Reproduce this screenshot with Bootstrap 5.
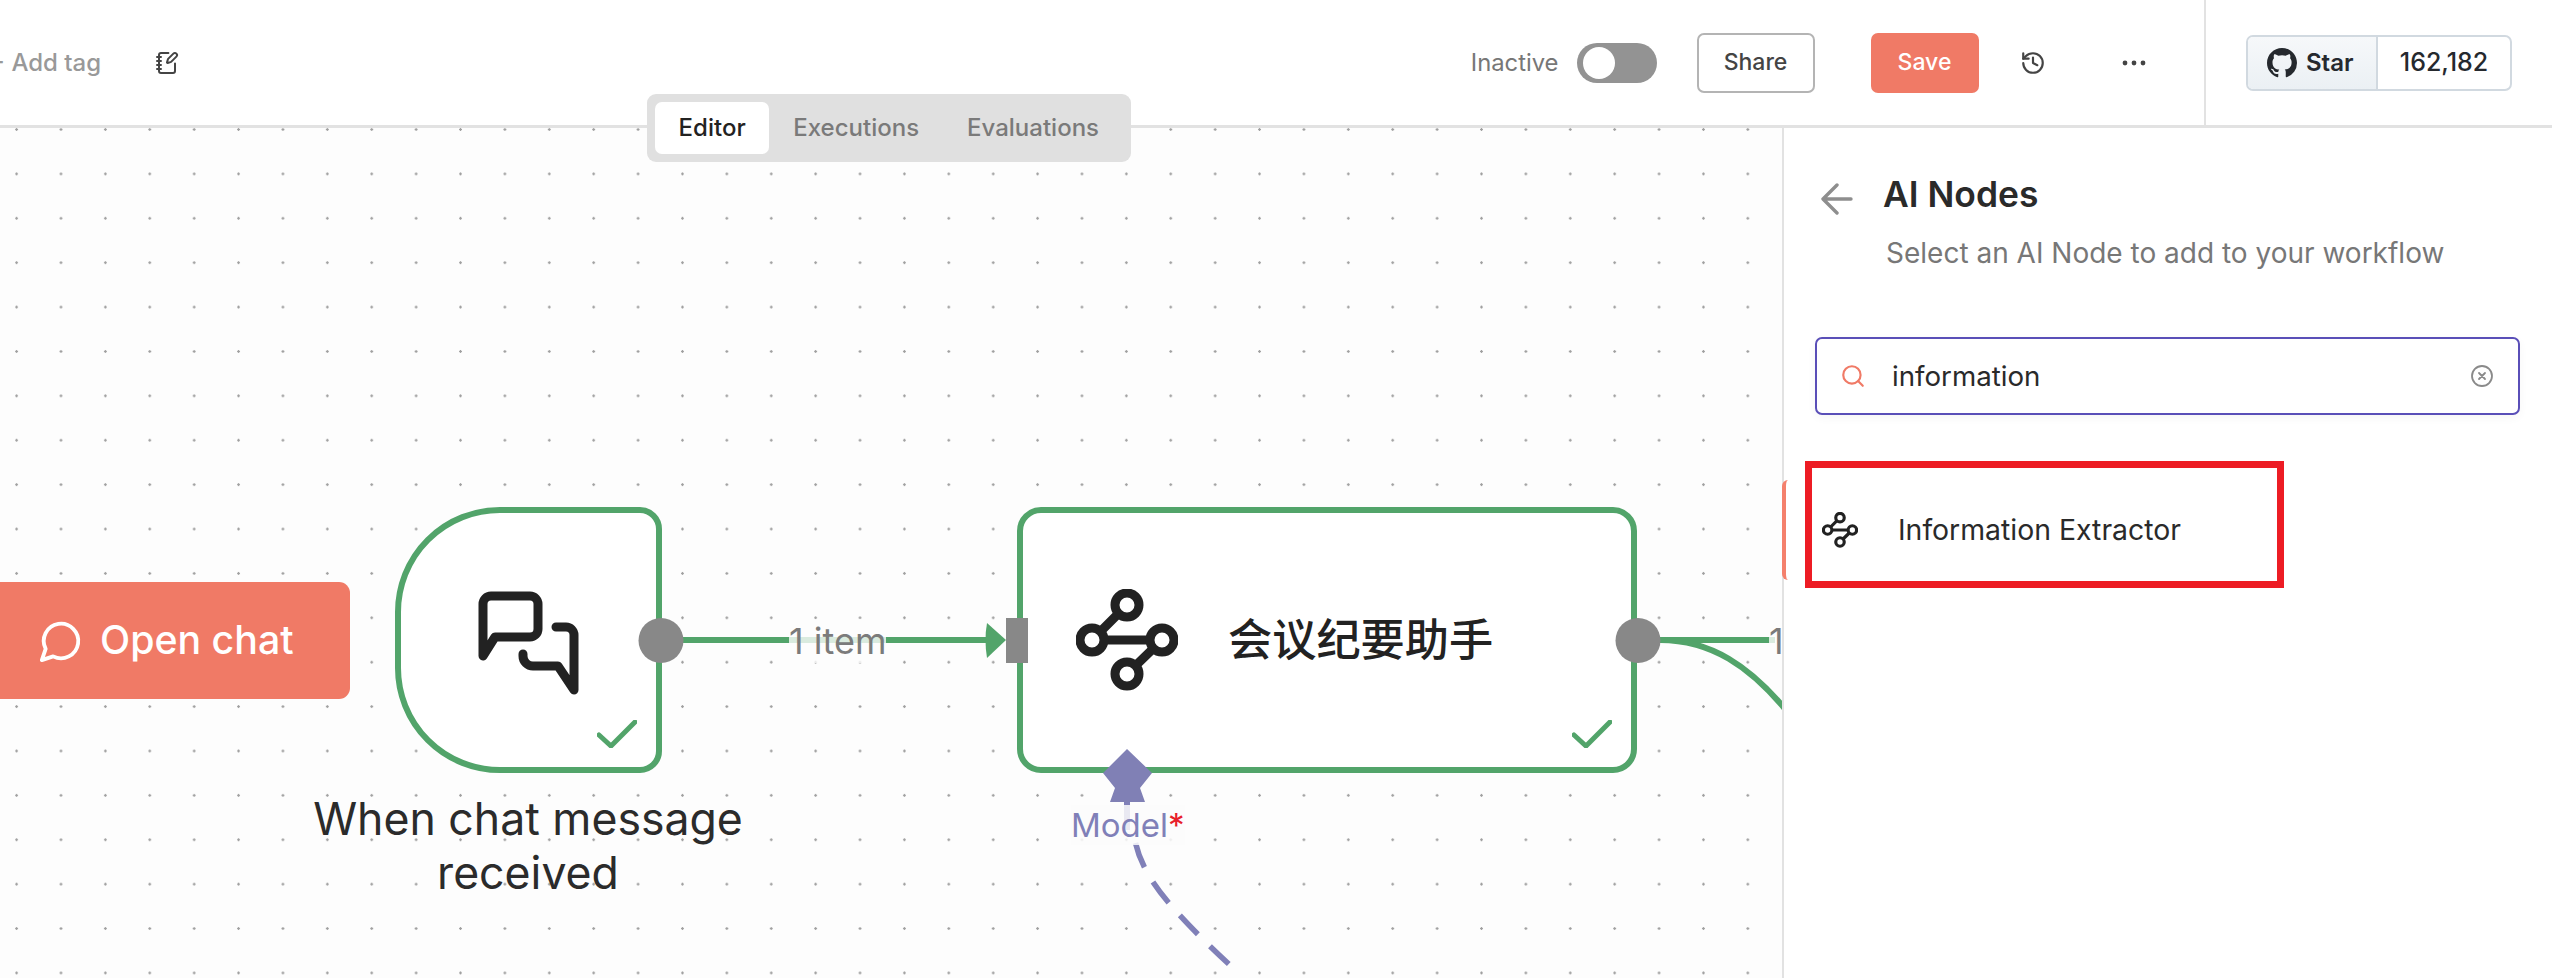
<!DOCTYPE html>
<html lang="en">
<head>
<meta charset="UTF-8">
<title>n8n workflow editor</title>
<link href="https://cdn.jsdelivr.net/npm/bootstrap@5.3.2/dist/css/bootstrap.min.css" rel="stylesheet">
<style>
  body { font-family: Inter, "Noto Sans CJK SC", sans-serif; width: 2552px; height: 978px; overflow: hidden; background: #fff; color: #222; }
  .top-bar { height: 128px; border-bottom: 3px solid #e2e2e2; }
  .tag-add { margin-left: -11px; font-size: 24px; font-weight: 500; color: #999; }
  .tag-edit { margin-left: 54px; color: #444; }
  .active-label { font-size: 23.8px; font-weight: 400; color: #777; }
  .toggle-track { width: 80px; height: 40px; margin-left: 18px; border-radius: 20px; background: #939393; padding: 4px 6px; }
  .toggle-knob { width: 32px; height: 32px; border-radius: 50%; background: #fff; }
  .btn-share, .btn-save { height: 60px; font-size: 23px; font-weight: 500; border-radius: 7px; padding: 0; }
  .btn-share { width: 118px; margin-left: 40px; border: 2px solid #b4b4b4; color: #444; background: #fff; }
  .btn-save { width: 108px; margin-left: 56px; border: 0; background: #f07a66; color: #fff; }
  .icon-history { margin-left: 41px; color: #444; }
  .icon-more { margin-left: 76.5px; margin-right: 58px; color: #444; }
  .star-box { width: 348px; height: 125px; border-left: 2px solid #e2e2e2; padding-left: 40px; }
  .gh-star { width: 266px; height: 56px; border: 2px solid #d1d9e0; border-radius: 7px; font-size: 24px; font-weight: 600; color: #25292e; overflow: hidden; }
  .gh-left { width: 130px; background: linear-gradient(#f6f8fa, #ebf0f4); border-right: 2px solid #d1d9e0; padding-left: 19px; gap: 9px; }
  .gh-count { flex: 1; font-size: 25px; font-weight: 500; }
  .main-area { height: 850px; }
  .canvas-area { width: 1782px; height: 850px; overflow: hidden; background-color: #fdfdfd; background-image: radial-gradient(circle, #a0a0a0 1px, transparent 1.5px); background-size: 44.4px 44.4px; background-position: -5.6px -20.7px; }
  .edge-layer { left: 0; top: 0; }
  .view-tabs { left: 647px; top: 94px; width: 484px; height: 68px; background: #e0e0e0; border-radius: 9px; padding: 8px; z-index: 5; font-size: 24px; font-weight: 500; color: #7a7a7a; }
  .view-tab { height: 52px; padding: 0 24px; border-radius: 7px; }
  .view-tab-on { width: 115px; padding: 0; background: #fff; color: #222; }
  .open-chat { left: 0; top: 454px; width: 350px; height: 117px; background: #f07a66; color: #fff; border-radius: 0 11px 11px 0; font-size: 39.3px; font-weight: 500; padding-left: 38px; gap: 16px; }
  .flow-node { top: 379px; height: 266px; background: #fff; border: 6px solid #52a46a; }
  .node-trigger { left: 395px; width: 267px; border-radius: 105px 22px 22px 105px; }
  .node-ai { left: 1017px; width: 620px; border-radius: 24px; padding-left: 53px; gap: 50px; font-size: 44.2px; font-weight: 500; }
  .icon-chat { left: 70px; top: 74px; }
  .node-check { right: 19px; bottom: 19px; }
  .node-caption { left: 264px; top: 664px; width: 528px; font-size: 44.6px; line-height: 54px; font-weight: 400; color: #2b2b2b; text-align: center; }
  .edge-label { font-size: 36px; line-height: 44px; color: #7b7b7b; background: rgba(252,252,252,.8); }
  .label-one { left: 789px; top: 491px; }
  .label-two { left: 1769px; top: 491px; }
  .model-label { left: 1071px; top: 677px; font-size: 33px; line-height: 40px; color: #8080b8; background: rgba(252,252,252,.85); }
  .model-label span { color: #e8202a; }
  .side-panel { width: 770px; border-left: 2px solid #e2e2e2; }
  .panel-head { padding: 42.5px 0 0 37px; gap: 30px; }
  .panel-back { margin-top: 8px; }
  .panel-title { font-size: 35.4px; line-height: 48px; font-weight: 600; margin: 0; color: #2a2a2a; }
  .panel-sub { margin: 16.5px 0 0 102px; font-size: 28px; line-height: 36px; color: #777; }
  .search-box { width: 705px; height: 78px; margin: 66px 0 0 31px; border: 2.5px solid #5a4fb8; border-radius: 7px; padding: 0 24px 0 23px; box-shadow: 0 3px 10px rgba(0,0,0,.04); }
  .search-input { border: 0; outline: 0; padding: 2px 0 0; margin-left: 26px; font-size: 27.7px; color: #2a2a2a; box-shadow: none; background: transparent; }
  .node-item { height: 100px; margin: 65px 0 0 -2px; padding: 0 0 0 36px; gap: 40px; border: 0; border-left: 4px solid #f4806c; border-radius: 0; font-size: 28.4px; font-weight: 400; color: #2a2a2a; background: transparent; }
  .red-box { left: 19px; top: -19px; width: 479px; height: 127px; border: 7px solid #ed1c24; pointer-events: none; }
</style>
</head>
<body>
  <svg width="0" height="0" class="d-block">
    <symbol id="node-graph" viewBox="0 0 102 102">
      <g fill="#fff" stroke="#222" stroke-width="9">
        <path d="M16 51H86M51 16L16 51M86 51L51 85" fill="none"/>
        <circle cx="51" cy="16" r="12"/>
        <circle cx="16" cy="51" r="12"/>
        <circle cx="86" cy="51" r="12"/>
        <circle cx="51" cy="85" r="12"/>
      </g>
    </symbol>
  </svg>

  <header class="top-bar d-flex align-items-center">
    <span class="tag-add">+ Add tag</span>
    <svg class="tag-edit" width="24" height="24" viewBox="0 0 24 24" fill="none" stroke="currentColor" stroke-width="2" stroke-linecap="round" stroke-linejoin="round"><path d="M13.4 2H6a2 2 0 0 0-2 2v16a2 2 0 0 0 2 2h12a2 2 0 0 0 2-2v-7.4"/><path d="M2 6h4M2 10h4M2 14h4M2 18h4"/><path d="M21.378 5.626a1 1 0 1 0-3.004-3.004l-5.01 5.012a2 2 0 0 0-.506.854l-.837 2.87a.5.5 0 0 0 .62.62l2.87-.837a2 2 0 0 0 .854-.506z"/></svg>
    <div class="ms-auto d-flex align-items-center">
      <span class="active-label">Inactive</span>
      <div class="toggle-track"><div class="toggle-knob"></div></div>
      <button class="btn btn-share">Share</button>
      <button class="btn btn-save">Save</button>
      <svg class="icon-history" width="26" height="26" viewBox="0 0 24 24" fill="none" stroke="currentColor" stroke-width="2" stroke-linecap="round" stroke-linejoin="round"><path d="M3 12a9 9 0 1 0 9-9 9.75 9.75 0 0 0-6.74 2.74L3 8"/><path d="M3 3v5h5"/><path d="M12 7v5l4 2"/></svg>
      <svg class="icon-more" width="24" height="6" viewBox="0 0 24 6" fill="currentColor"><circle cx="3" cy="3" r="2.4"/><circle cx="12" cy="3" r="2.4"/><circle cx="21" cy="3" r="2.4"/></svg>
      <div class="star-box d-flex align-items-center">
        <div class="gh-star d-flex">
          <div class="gh-left d-flex align-items-center">
            <svg width="30" height="30" viewBox="0 0 16 16" fill="#25292e"><path d="M8 0C3.58 0 0 3.58 0 8c0 3.54 2.29 6.53 5.47 7.59.4.07.55-.17.55-.38 0-.19-.01-.82-.01-1.49-2.01.37-2.53-.49-2.69-.94-.09-.23-.48-.94-.82-1.13-.28-.15-.68-.52-.01-.53.63-.01 1.08.58 1.23.82.72 1.21 1.87.87 2.33.66.07-.52.28-.87.51-1.07-1.78-.2-3.64-.89-3.64-3.95 0-.87.31-1.59.82-2.15-.08-.2-.36-1.02.08-2.12 0 0 .67-.21 2.2.82.64-.18 1.32-.27 2-.27.68 0 1.36.09 2 .27 1.53-1.04 2.2-.82 2.2-.82.44 1.1.16 1.92.08 2.12.51.56.82 1.27.82 2.15 0 3.07-1.87 3.75-3.65 3.95.29.25.54.73.54 1.48 0 1.07-.01 1.93-.01 2.2 0 .21.15.46.55.38A8.013 8.013 0 0016 8c0-4.42-3.58-8-8-8z"/></svg>
            <span>Star</span>
          </div>
          <div class="gh-count d-flex align-items-center justify-content-center">162,182</div>
        </div>
      </div>
    </div>
  </header>

  <div class="main-area d-flex">
    <main class="canvas-area position-relative">
      <svg class="edge-layer position-absolute" width="1782" height="850" viewBox="0 128 1782 850" fill="none">
        <path d="M683 640H990M1660 640H1775" stroke="#52a46a" stroke-width="6"/>
        <path d="M1660 640C1710 640 1750 665 1790 715" stroke="#52a46a" stroke-width="6"/>
        <path d="M1127 800V830" stroke="#8080b8" stroke-width="6"/>
        <path d="M1135.5 843C1143 875 1165 905 1233 968" stroke="#8080b8" stroke-width="5.5" stroke-dasharray="26 17"/>
      </svg>

      <div class="open-chat position-absolute d-flex align-items-center">
        <svg width="46" height="46" viewBox="0 0 24 24" fill="none" stroke="#fff" stroke-width="2" stroke-linecap="round" stroke-linejoin="round"><path d="M7.9 20A9 9 0 1 0 4 16.1L2 22Z"/></svg>
        <span>Open chat</span>
      </div>

      <div class="flow-node node-trigger position-absolute">
        <svg class="icon-chat position-absolute" width="110" height="110" viewBox="470 585 110 110" fill="none" stroke="#222" stroke-width="9" stroke-linecap="round" stroke-linejoin="round"><path d="M482 654V602a8 8 0 0 1 8-8H529a8 8 0 0 1 8 8V627a8 8 0 0 1-8 8H494Z"/><path d="M555 625H565a8 8 0 0 1 8 8V688L557 664H532a10 10 0 0 1-10-10V652"/></svg>
        <svg class="node-check position-absolute" width="40" height="28" viewBox="0 0 40 28" fill="none" stroke="#52a46a" stroke-width="5" stroke-linecap="round" stroke-linejoin="miter"><path d="M2 15L14 26L38 2"/></svg>
      </div>
      <div class="node-caption position-absolute">When chat message<br>received</div>

      <div class="flow-node node-ai position-absolute d-flex align-items-center">
        <svg width="102" height="102"><use href="#node-graph"/></svg>
        <span>会议纪要助手</span>
        <svg class="node-check position-absolute" width="40" height="28" viewBox="0 0 40 28" fill="none" stroke="#52a46a" stroke-width="5" stroke-linecap="round" stroke-linejoin="miter"><path d="M2 15L14 26L38 2"/></svg>
      </div>

      <svg class="edge-layer position-absolute" width="1782" height="850" viewBox="0 128 1782 850">
        <circle cx="661" cy="640.5" r="22.5" fill="#888"/>
        <circle cx="1638" cy="640.5" r="22.5" fill="#888"/>
        <path d="M987 623L1006 640L987 658Q984 640 987 623Z" fill="#52a46a"/>
        <rect x="1006" y="618" width="22" height="45" fill="#888"/>
        <path d="M1127 749L1152 773L1140 788L1145 802H1110L1115 788L1103 773Z" fill="#8080b5"/>
      </svg>
      <span class="edge-label label-one position-absolute">1 item</span>
      <span class="edge-label label-two position-absolute">1</span>
      <span class="model-label position-absolute">Model<span>*</span></span>
    </main>

    <aside class="side-panel bg-white">
      <div class="panel-head d-flex align-items-center">
        <svg class="panel-back" width="32" height="32" viewBox="0 0 32 32" fill="none" stroke="#8e8e8e" stroke-width="3.4" stroke-linecap="round" stroke-linejoin="round"><path d="M30 16H3M16 2L2 16L16 30"/></svg>
        <h1 class="panel-title">AI Nodes</h1>
      </div>
      <p class="panel-sub">Select an AI Node to add to your workflow</p>
      <div class="search-box d-flex align-items-center">
        <svg class="flex-shrink-0" width="26" height="26" viewBox="0 0 24 24" fill="none" stroke="#f07a66" stroke-width="2" stroke-linecap="round"><circle cx="11" cy="11" r="8"/><path d="m21 21-4.3-4.3"/></svg>
        <input class="search-input form-control" type="text" value="information">
        <svg class="flex-shrink-0" width="24" height="24" viewBox="0 0 24 24" fill="none" stroke="#8a8a8a" stroke-width="1.8" stroke-linecap="round"><circle cx="12" cy="12" r="10"/><path d="m15 9-6 6M9 9l6 6"/></svg>
      </div>
      <div class="list-group">
        <div class="list-group-item node-item d-flex align-items-center position-relative">
          <svg width="36" height="36"><use href="#node-graph"/></svg>
          <span>Information Extractor</span>
          <div class="red-box position-absolute"></div>
        </div>
      </div>
    </aside>
  </div>

  <nav class="view-tabs position-absolute d-flex align-items-center">
    <div class="view-tab view-tab-on d-flex align-items-center justify-content-center">Editor</div>
    <div class="view-tab d-flex align-items-center">Executions</div>
    <div class="view-tab d-flex align-items-center">Evaluations</div>
  </nav>
</body>
</html>
